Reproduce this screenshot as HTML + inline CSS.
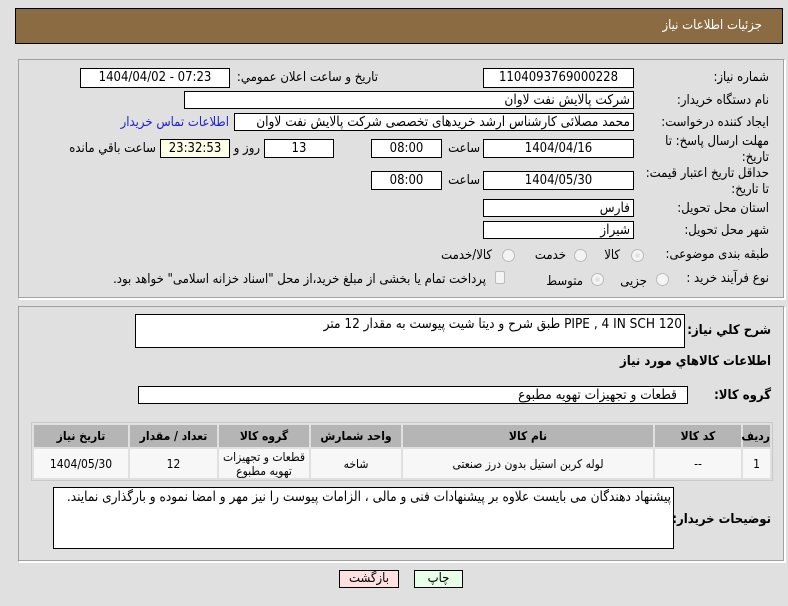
<!DOCTYPE html>
<html><head><meta charset="utf-8"><style>
*{box-sizing:border-box;margin:0;padding:0}
body{width:788px;height:606px;background:#E0E0E0;font-family:"DejaVu Sans Condensed","DejaVu Sans",sans-serif;font-size:13px;color:#000;position:relative;overflow:hidden}
.a{position:absolute;white-space:nowrap}
.box{position:absolute;background:#fff;border:1px solid #000;text-align:center;line-height:17px;font-size:13px;font-family:"Liberation Sans Narrow","DejaVu Sans Condensed",sans-serif;overflow:hidden;white-space:nowrap}
.t{font-family:"DejaVu Sans Condensed","DejaVu Sans",sans-serif;font-size:13.5px}
.lbl{position:absolute;white-space:nowrap;direction:rtl;text-align:right;font-size:13px}
.rad{position:absolute;width:13px;height:13px;border-radius:50%;border:1px solid #bbb;background:#f4f4f4}
.panel{position:absolute;border:1px solid #a0a0a0;border-right-color:#fff;border-bottom-color:#fff;box-shadow:inset -1px -1px 0 #a0a0a0, 1px 1px 0 #fff}
table{table-layout:fixed}
td{background:#F7F7F7;text-align:center;font-size:12px;line-height:14px;overflow:hidden}
th{background:#B5B5B5;font-size:12px;font-weight:bold;line-height:14px}
</style></head><body>
<div class="a" style="left:15px;top:8px;width:768px;height:36px;background:#8B6B42;border:1px solid #000"></div>
<div class="lbl" style="right:26px;top:18px;color:#fff">جزئیات اطلاعات نیاز</div>

<div class="panel" style="left:18px;top:59px;width:767px;height:240px"></div>
<div class="panel" style="left:18px;top:306px;width:767px;height:256px"></div>

<div class="lbl" style="right:19px;top:70px">شماره نیاز:</div>
<div class="box" style="left:483px;top:68px;width:151px;height:20px">1104093769000228</div>
<div class="lbl" style="right:410px;top:70px">تاریخ و ساعت اعلان عمومي:</div>
<div class="box" style="left:80px;top:68px;width:150px;height:20px">1404/04/02 - 07:23</div>

<div class="lbl" style="right:19px;top:93px">نام دستگاه خریدار:</div>
<div class="box t" style="left:184px;top:91px;width:450px;height:18px;text-align:right;padding-right:3px;line-height:16px;direction:rtl">شرکت پالایش نفت لاوان</div>

<div class="lbl" style="right:19px;top:115px">ایجاد کننده درخواست:</div>
<div class="box t" style="left:234px;top:113px;width:400px;height:18px;text-align:right;padding-right:3px;line-height:16px;direction:rtl">محمد مصلائی کارشناس ارشد خریدهای تخصصی شرکت پالایش نفت لاوان</div>
<div class="lbl" style="right:559px;top:115px;color:#2222cc">اطلاعات تماس خریدار</div>

<div class="lbl" style="right:19px;top:134px;line-height:16px">مهلت ارسال پاسخ: تا<br>تاریخ:</div>
<div class="box" style="left:483px;top:139px;width:151px;height:19px">1404/04/16</div>
<div class="lbl" style="right:308px;top:141px">ساعت</div>
<div class="box" style="left:371px;top:139px;width:71px;height:19px">08:00</div>
<div class="box" style="left:264px;top:139px;width:70px;height:19px">13</div>
<div class="lbl" style="right:528px;top:141px">روز و</div>
<div class="box" style="left:160px;top:139px;width:70px;height:19px;background:#FFFFE8">23:32:53</div>
<div class="lbl" style="right:632px;top:141px">ساعت باقي مانده</div>

<div class="lbl" style="right:19px;top:166px;line-height:16px">حداقل تاریخ اعتبار قیمت:<br>تا تاریخ:</div>
<div class="box" style="left:483px;top:171px;width:151px;height:19px">1404/05/30</div>
<div class="lbl" style="right:308px;top:173px">ساعت</div>
<div class="box" style="left:371px;top:171px;width:71px;height:19px">08:00</div>

<div class="lbl" style="right:19px;top:201px">استان محل تحویل:</div>
<div class="box t" style="left:483px;top:199px;width:151px;height:18px;text-align:right;padding-right:3px;line-height:16px;direction:rtl">فارس</div>
<div class="lbl" style="right:19px;top:223px">شهر محل تحویل:</div>
<div class="box t" style="left:483px;top:221px;width:151px;height:18px;text-align:right;padding-right:3px;line-height:16px;direction:rtl">شیراز</div>

<div class="lbl" style="right:19px;top:247px">طبقه بندی موضوعی:</div>
<div class="rad" style="left:631px;top:249px;background:#e4e4e4;box-shadow:inset 0 0 0 3px #f4f4f4"></div>
<div class="lbl" style="right:168px;top:248px">کالا</div>
<div class="rad" style="left:574px;top:249px"></div>
<div class="lbl" style="right:222px;top:248px">خدمت</div>
<div class="rad" style="left:502px;top:249px"></div>
<div class="lbl" style="right:296px;top:248px">کالا/خدمت</div>

<div class="lbl" style="right:19px;top:271px">نوع فرآیند خرید :</div>
<div class="rad" style="left:656px;top:273px"></div>
<div class="lbl" style="right:141px;top:274px">جزیی</div>
<div class="rad" style="left:591px;top:273px;background:#e4e4e4;box-shadow:inset 0 0 0 3px #f4f4f4"></div>
<div class="lbl" style="right:205px;top:274px">متوسط</div>
<div class="a" style="left:495px;top:271px;width:10px;height:13px;border:1px solid #bbb;background:#f4f4f4;border-radius:2px"></div>
<div class="lbl" style="right:302px;top:272px">پرداخت تمام یا بخشی از مبلغ خرید،از محل "اسناد خزانه اسلامی" خواهد بود.</div>

<div class="lbl" style="right:17px;top:323px;font-weight:bold">شرح كلي نياز:</div>
<div class="box t" style="left:135px;top:314px;width:550px;height:34px;text-align:right;padding-right:2px;line-height:18px;direction:rtl">PIPE , 4 IN SCH 120 طبق شرح و دیتا شیت پیوست به مقدار 12 متر</div>
<div class="lbl" style="right:17px;top:354px;font-weight:bold">اطلاعات كالاهاي مورد نياز</div>
<div class="lbl" style="right:17px;top:388px;font-weight:bold">گروه کالا:</div>
<div class="box t" style="left:138px;top:386px;width:550px;height:18px;text-align:right;padding-right:10px;line-height:16px;direction:rtl">قطعات و تجهیزات تهویه مطبوع</div>

<table style="position:absolute;left:31px;top:422px;width:742px;height:59px;border:1px solid #c8c8c8;border-spacing:2px;direction:rtl;background:#E0E0E0">
<tr style="height:22px"><th style="width:27px">ردیف</th><th style="width:86px">کد کالا</th><th style="width:250px">نام کالا</th><th style="width:90px">واحد شمارش</th><th style="width:90px">گروه کالا</th><th style="width:87px">تعداد / مقدار</th><th>تاریخ نیاز</th></tr>
<tr style="height:29px"><td>1</td><td>--</td><td>لوله کربن استیل بدون درز صنعتی</td><td>شاخه</td><td>قطعات و تجهیزات<br>تهویه مطبوع</td><td>12</td><td>1404/05/30</td></tr>
</table>

<div class="lbl" style="right:17px;top:512px;font-weight:bold">توضیحات خریدار:</div>
<div class="box t" style="left:53px;top:487px;width:621px;height:62px;text-align:right;padding-right:2px;line-height:18px;direction:rtl">پیشنهاد دهندگان می بایست علاوه بر پیشنهادات فنی و مالی ، الزامات پیوست را نیز مهر و امضا نموده و بارگذاری نمایند.</div>

<div class="box t" style="left:339px;top:570px;width:60px;height:18px;background:#FFE0E0;line-height:16px;font-size:13px">بازگشت</div>
<div class="box t" style="left:414px;top:570px;width:49px;height:18px;background:#E8FFE8;line-height:16px;font-size:13px">چاپ</div>
</body></html>
